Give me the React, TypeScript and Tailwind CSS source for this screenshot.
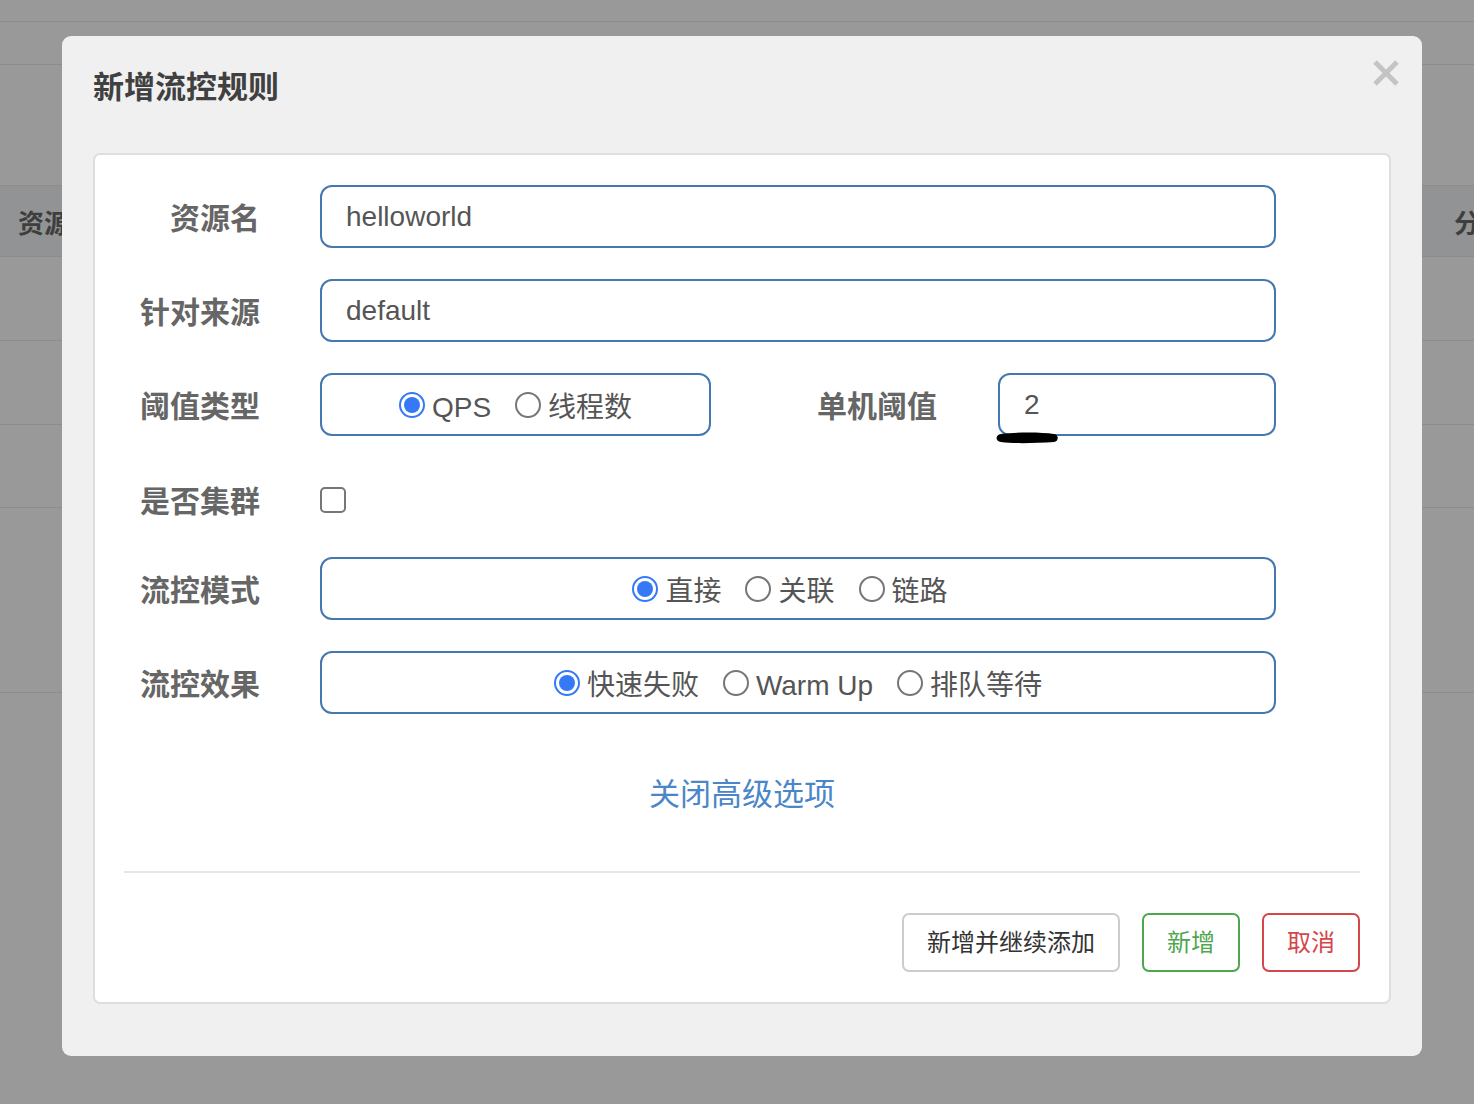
import React from 'react';

const FONT = '"Liberation Sans", "Noto Sans CJK SC", sans-serif';

const Radio: React.FC<{ checked?: boolean; label: string }> = ({ checked, label }) => (
  <label className="flex items-center">
    {checked ? (
      <span className="w-[26px] h-[26px] rounded-full border-2 border-[#3579f6] bg-white p-[3px] flex">
        <span className="flex-1 rounded-full bg-[#3579f6]" />
      </span>
    ) : (
      <span className="w-[26px] h-[26px] rounded-full border-2 border-[#767676] bg-white" />
    )}
    <span className="ml-[7px] text-[28px] leading-none text-[#555] pt-[6px]">{label}</span>
  </label>
);

const RadioBox: React.FC<{ items: string[]; width: string; shift?: string }> = ({ items, width, shift = '' }) => (
  <div className={`${width} h-[63px] rounded-[12px] border-2 border-[#4577b0] flex items-center justify-center gap-[24px] ${shift}`}>
    {items.map((it, i) => (
      <Radio key={it} label={it} checked={i === 0} />
    ))}
  </div>
);

const Label: React.FC<{ text: string; className?: string }> = ({ text, className = 'w-[136px]' }) => (
  <div className={`${className} text-right text-[30px] font-bold text-[#666] leading-none pt-[4px]`}>{text}</div>
);

const TextInput: React.FC<{ value: string; width: string }> = ({ value, width }) => (
  <div className={`${width} h-[63px] rounded-[12px] border-2 border-[#4577b0] flex items-center px-[24px] text-[28px] text-[#555]`}>
    {value}
  </div>
);

const Background: React.FC = () => (
  <div className="flex flex-col">
    <div className="h-[22px] border-b border-[#8c8c8c]" />
    <div className="h-[43px] border-b border-[#8c8c8c]" />
    <div className="h-[121px] border-b border-[#8c8c8c]" />
    <div className="h-[71px] border-b border-[#8c8c8c] bg-[#929394] flex items-center justify-between pl-[18px] pt-[6px] text-[26px] font-bold text-[#3e3e3e]">
      <span>资源名</span>
      <span className="w-[20px] overflow-hidden whitespace-nowrap">分</span>
    </div>
    <div className="h-[84px] border-b border-[#8c8c8c]" />
    <div className="h-[84px] border-b border-[#8c8c8c]" />
    <div className="h-[83px] border-b border-[#8c8c8c]" />
    <div className="h-[185px] border-b border-[#8c8c8c]" />
  </div>
);

export default function App() {
  return (
    <div className="relative w-[1474px] h-[1104px] bg-[#999999] overflow-hidden" style={{ fontFamily: FONT }}>
      <Background />

      <div className="absolute left-[62px] top-[36px] w-[1360px] h-[1020px] bg-[#f0f0f0] rounded-[9px] px-[31px] pt-[32px]">
        <div className="flex items-start justify-between">
          <h4 className="text-[31px] font-bold text-[#404040] leading-[40px]">新增流控规则</h4>
          <svg width="28" height="28" viewBox="0 0 28 28" className="mt-[-9px] mr-[-9px]">
            <path d="M3 3 L25 25 M25 3 L3 25" stroke="#c4c4c4" strokeWidth="5" />
          </svg>
        </div>

        <div className="mt-[45px] bg-white border-2 border-[#dedede] rounded-[7px] px-[29px] pt-[30px] pb-[30px]">
          <div className="flex flex-col">
            <div className="flex items-center gap-[60px]">
              <Label text="资源名" />
              <TextInput value="helloworld" width="w-[956px]" />
            </div>
            <div className="flex items-center gap-[60px] mt-[31px]">
              <Label text="针对来源" />
              <TextInput value="default" width="w-[956px]" />
            </div>
            <div className="flex items-center mt-[31px]">
              <Label text="阈值类型" />
              <div className="ml-[60px]">
                <RadioBox items={['QPS', '线程数']} width="w-[391px]" />
              </div>
              <Label text="单机阈值" className="w-[226px]" />
              <div className="relative ml-[61px]">
                <TextInput value="2" width="w-[278px]" />
                <svg width="66" height="16" viewBox="0 0 66 16" className="absolute left-[-3px] top-[57px]">
                  <path d="M6 4 C22 2 46 2 59 4 C64 5 64 11 59 12 C42 13 20 14 6 12 C0 11 0 5 6 4 Z" fill="#000" />
                </svg>
              </div>
            </div>
            <div className="flex items-center gap-[60px] mt-[33px] h-[62px]">
              <Label text="是否集群" />
              <span className="w-[26px] h-[26px] rounded-[5px] border-2 border-[#767676] bg-white" />
            </div>
            <div className="flex items-center gap-[60px] mt-[26px]">
              <Label text="流控模式" />
              <RadioBox items={['直接', '关联', '链路']} width="w-[956px]" shift="pr-[16px]" />
            </div>
            <div className="flex items-center gap-[60px] mt-[31px]">
              <Label text="流控效果" />
              <RadioBox items={['快速失败', 'Warm Up', '排队等待']} width="w-[956px]" />
            </div>
          </div>

          <div className="mt-[61px] text-center text-[31px] leading-[40px] text-[#4a86c8]">关闭高级选项</div>

          <div className="mt-[56px] border-t-2 border-[#e6e6e6]" />

          <div className="mt-[40px] flex justify-end gap-[22px]">
            <button className="w-[218px] h-[59px] rounded-[7px] border-2 border-[#cccccc] bg-white text-[24px] text-[#333]">
              新增并继续添加
            </button>
            <button className="w-[98px] h-[59px] rounded-[7px] border-2 border-[#4ea64e] bg-white text-[24px] text-[#4ea64e]">
              新增
            </button>
            <button className="w-[98px] h-[59px] rounded-[7px] border-2 border-[#d4464a] bg-white text-[24px] text-[#d4464a]">
              取消
            </button>
          </div>
        </div>
      </div>
    </div>
  );
}
